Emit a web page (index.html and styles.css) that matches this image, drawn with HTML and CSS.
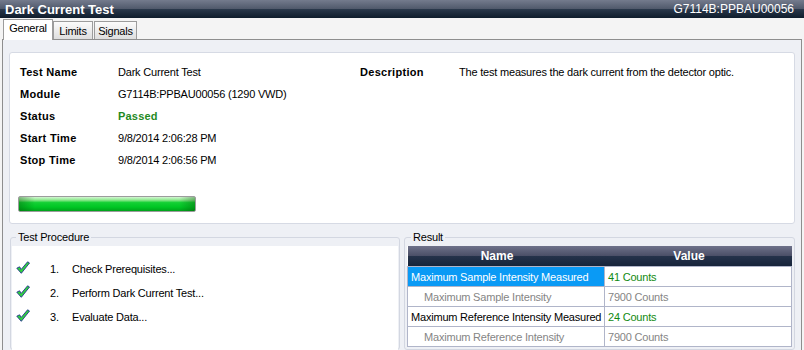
FILE: index.html
```html
<!DOCTYPE html>
<html lang="en">
<head>
    <meta charset="UTF-8">
    <title>Dark Current Test</title>
    <link rel="stylesheet" href="styles.css">
</head>
<body>
    <div class="titlebar">
        <span class="title">Dark Current Test</span>
        <span class="device">G7114B:PPBAU00056</span>
    </div>

    <div class="tabstrip">
        <div class="tab active">General</div>
        <div class="tab limits">Limits</div>
        <div class="tab signals">Signals</div>
    </div>

    <div class="panel">
        <div class="info">
            <div class="facts">
                <dl class="grid main">
                    <dt>Test Name</dt><dd>Dark Current Test</dd>
                    <dt>Module</dt><dd>G7114B:PPBAU00056 (1290 VWD)</dd>
                    <dt>Status</dt><dd class="passed">Passed</dd>
                    <dt>Start Time</dt><dd>9/8/2014 2:06:28 PM</dd>
                    <dt>Stop Time</dt><dd>9/8/2014 2:06:56 PM</dd>
                </dl>
                <dl class="grid desc">
                    <dt>Description</dt><dd>The test measures the dark current from the detector optic.</dd>
                </dl>
            </div>
            <div class="progress"></div>
        </div>

        <div class="lower">
            <fieldset class="group procedure">
                <legend>Test Procedure</legend>
                <div class="steps">
                    <div class="step">
                        <svg class="check" width="14" height="13" viewBox="0 0 14 13"><path d="M0.8 7.2 L3.6 5.8 L5.2 8.4 L11.6 0.8 L13.5 2 L5.3 12.3 Z" fill="#2fd13c" stroke="#25338f" stroke-width="0.9" stroke-linejoin="round"/></svg>
                        <span>1.</span><span>Check Prerequisites...</span>
                    </div>
                    <div class="step">
                        <svg class="check" width="14" height="13" viewBox="0 0 14 13"><path d="M0.8 7.2 L3.6 5.8 L5.2 8.4 L11.6 0.8 L13.5 2 L5.3 12.3 Z" fill="#2fd13c" stroke="#25338f" stroke-width="0.9" stroke-linejoin="round"/></svg>
                        <span>2.</span><span>Perform Dark Current Test...</span>
                    </div>
                    <div class="step">
                        <svg class="check" width="14" height="13" viewBox="0 0 14 13"><path d="M0.8 7.2 L3.6 5.8 L5.2 8.4 L11.6 0.8 L13.5 2 L5.3 12.3 Z" fill="#2fd13c" stroke="#25338f" stroke-width="0.9" stroke-linejoin="round"/></svg>
                        <span>3.</span><span>Evaluate Data...</span>
                    </div>
                </div>
            </fieldset>

            <fieldset class="group result">
                <legend>Result</legend>
                <table class="results">
                    <tr><th class="col-name">Name</th><th class="col-value">Value</th></tr>
                    <tr><td class="selected">Maximum Sample Intensity Measured</td><td class="measured">41 Counts</td></tr>
                    <tr><td class="limit">Maximum Sample Intensity</td><td class="muted">7900 Counts</td></tr>
                    <tr><td>Maximum Reference Intensity Measured</td><td class="measured">24 Counts</td></tr>
                    <tr><td class="limit">Maximum Reference Intensity</td><td class="muted">7900 Counts</td></tr>
                </table>
            </fieldset>
        </div>
    </div>
</body>
</html>
```

FILE: styles.css
```css
body {
    margin: 0;
    width: 804px;
    height: 350px;
    overflow: hidden;
    font-family: "Liberation Sans", Arial, sans-serif;
    font-size: 11px;
    letter-spacing: -0.2px;
    color: #000;
    background: #f4f4f4;
}
.titlebar {
    height: 18px;
    display: flex;
    justify-content: space-between;
    align-items: center;
    padding: 0 10px 0 5px;
    background: linear-gradient(#747b8d, #515a6c 48%, #2a384b 52%, #0f1d2c);
    color: #fff;
    letter-spacing: 0;
}
.title {
    font-weight: bold;
    font-size: 13px;
}
.device {
    font-size: 12px;
}
.tabstrip {
    height: 21px;
    display: flex;
    align-items: flex-end;
    padding-left: 3px;
}
.tab {
    box-sizing: border-box;
    height: 18px;
    line-height: 18px;
    border: 1px solid #9c9c9c;
    border-bottom: none;
    background: linear-gradient(#fbfbfb, #dedede);
    text-align: center;
}
.tab.active {
    width: 50px;
    height: 21px;
    line-height: 17px;
    background: #fff;
    margin-bottom: -1px;
    position: relative;
    z-index: 1;
}
.limits {
    width: 40px;
    margin-right: 1px;
}
.signals {
    width: 43px;
}
.panel {
    margin: 0 2px;
    height: 311px;
    box-sizing: border-box;
    border: 1px solid #8e8e8e;
    border-bottom: none;
    background: #eef0f5;
}
.info {
    margin: 12px 6px 0;
    height: 172px;
    box-sizing: border-box;
    padding: 8px 0 0 8px;
    background: #fff;
    border: 1px solid #d6dae4;
    border-radius: 3px;
}
.facts {
    display: flex;
}
.grid {
    display: grid;
    margin: 0;
    line-height: 22px;
}
.grid dd {
    margin: 0;
}
.grid dt {
    font-weight: bold;
    letter-spacing: 0.3px;
}
.main {
    width: 340px;
    padding-left: 2px;
    grid-template-columns: 98px auto;
    align-content: start;
}
.desc {
    grid-template-columns: 99px auto;
    align-content: start;
}
.passed {
    color: #1f8a1f;
    font-weight: bold;
    letter-spacing: 0.2px;
}
.progress {
    margin-top: 25px;
    width: 178px;
    height: 16px;
    box-sizing: border-box;
    border: 1px solid #9c9c9c;
    border-radius: 2px;
    background:
        linear-gradient(90deg, rgba(0, 70, 0, .35), rgba(0, 70, 0, 0) 9%, rgba(0, 70, 0, 0) 91%, rgba(0, 70, 0, .35)),
        linear-gradient(#d2f7d2, #8de88d 22%, #14d034 40%, #00c624 72%, #00a21a);
}
.lower {
    display: flex;
    gap: 4px;
    margin: 7px 0 0 7px;
}
.group {
    margin: 0;
    min-width: 0;
    height: 119px;
    box-sizing: border-box;
    border: 1px solid #d3d7e1;
    border-radius: 3px;
    padding: 0 1px;
}
.group legend {
    margin-left: 4px;
    padding: 0 2px;
    line-height: 13px;
}
.procedure {
    width: 390px;
}
.result {
    width: 391px;
    padding: 0 1px 0 2px;
}
.steps {
    margin-top: 2px;
    height: 110px;
    box-sizing: border-box;
    padding: 11px 0 0 4px;
    background: #fff;
}
.step {
    display: grid;
    grid-template-columns: 34px 22px auto;
    align-items: center;
    height: 24px;
}
.check {
    margin-top: -3px;
}
.results {
    margin-top: 2px;
    width: 385px;
    border-collapse: collapse;
    background: #fff;
}
.results th {
    height: 20px;
    padding: 0 18px 0 0;
    color: #fff;
    font-size: 12px;
    font-weight: bold;
    letter-spacing: 0;
    background: linear-gradient(#6e7189, #4c5068 48%, #25324a 52%, #16243a);
}
.col-name {
    width: 179px;
}
.results td {
    height: 19px;
    padding: 0 0 0 3px;
    border: 1px solid #b0b5c9;
    white-space: nowrap;
}
.results td.limit {
    padding-left: 16px;
    color: #858585;
}
.results td.selected {
    background: #0a9af5;
    color: #fff;
}
.measured {
    color: #118a11;
}
.muted {
    color: #858585;
}
```
